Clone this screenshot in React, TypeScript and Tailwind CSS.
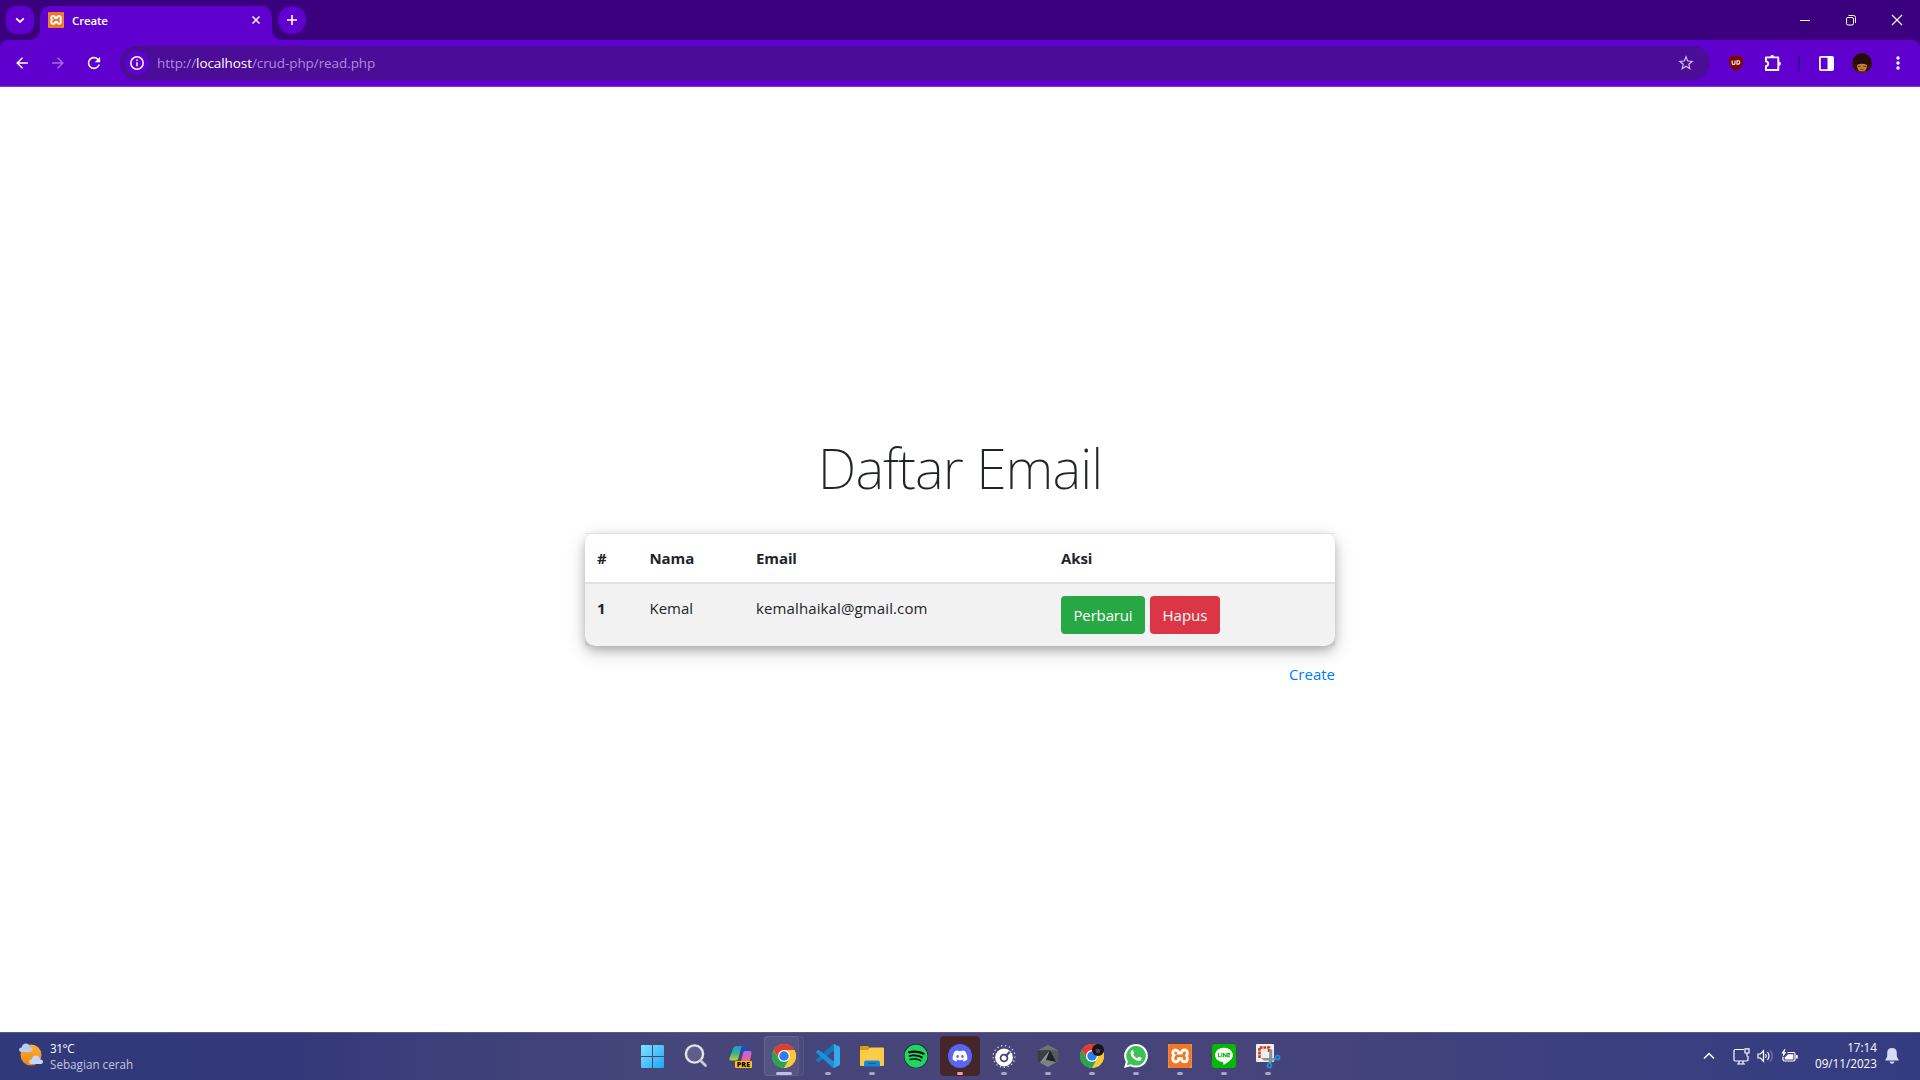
import React from "react";
import { MdArrowBack, MdArrowForward, MdRefresh, MdStarOutline } from "react-icons/md";
import { FaSpotify, FaDiscord, FaLine } from "react-icons/fa";
import { SiXampp } from "react-icons/si";

function XamppLogo({ className }: { className: string }) {
  return (
    <span className={`flex overflow-hidden rounded-[2px] bg-white ${className}`}>
      <SiXampp className="h-full w-full text-[#f37623]" />
    </span>
  );
}

function Chrome() {
  return (
    <svg viewBox="0 0 48 48" className="size-6">
      <circle cx="24" cy="24" r="23.500" fill="#fff" />
      <path d="M24 12h20.8A24 24 0 0 0 3.2 12l10.4 18z" fill="#e33b2e" />
      <path d="M34.4 30 24 48A24 24 0 0 0 44.8 12H24z" fill="#fcc934" />
      <path d="M13.6 30 3.2 12A24 24 0 0 0 24 48l10.4-18z" fill="#2ba24c" />
      <circle cx="24" cy="24" r="12" fill="#fff" />
      <circle cx="24" cy="24" r="9.5" fill="#2f7de9" />
    </svg>
  );
}

function WindowsLogo() {
  return (
    <svg viewBox="0 0 23 23" className="size-[23px]">
      <defs>
        <linearGradient id="win" x1="0" y1="0" x2="1" y2="1">
          <stop offset="0" stopColor="#82e0fb" />
          <stop offset="1" stopColor="#1fa6f8" />
        </linearGradient>
      </defs>
      <path d="M1 0h10v11H0V1q0-1 1-1M12 0h10q1 0 1 1v10H12zM0 12h11v11H1q-1 0-1-1zM12 12h11v10q0 1-1 1H12z" fill="url(#win)" />
    </svg>
  );
}

function Search() {
  return (
    <svg viewBox="0 0 24 24" className="size-6" fill="none">
      <circle cx="10.500" cy="10" r="8.600" fill="#ffffff22" stroke="#e3e3e6" strokeWidth="2.400" />
      <path d="m16.500 16.500 5 5" stroke="#c9c9d2" strokeWidth="2.800" strokeLinecap="round" />
    </svg>
  );
}

function Copilot() {
  return (
    <svg viewBox="0 0 24 24" className="size-6 shrink-0">
      <defs>
        <linearGradient id="cpA" x1="0" y1="0" x2="0" y2="1">
          <stop offset="0" stopColor="#2596d8" />
          <stop offset=".5" stopColor="#33b58d" />
          <stop offset="1" stopColor="#c6cf31" />
        </linearGradient>
        <linearGradient id="cpB" x1="0" y1="0" x2="0" y2="1">
          <stop offset="0" stopColor="#b865e6" />
          <stop offset="1" stopColor="#f0648b" />
        </linearGradient>
      </defs>
      <path d="M11 2h6q1.500 0 2 1.500L20.200 7H12z" fill="#164fc0" />
      <path d="M17 7h5q2 0 1.500 2.200L22 17h-9l2.200-8q.5-2 1.800-2" fill="url(#cpB)" />
      <path d="M8 2h7q-1.500 0-2 2l-2.500 10Q10 16.500 8 16.500H3Q.8 16.500 1.500 14L5.300 4Q6 2 8 2" fill="url(#cpA)" />
    </svg>
  );
}

function VsCode() {
  return (
    <svg viewBox="0 0 24 24" className="size-6">
      <path d="M18 6.500 3 18 1.600 17.900.3 16.700q-.6-.7 0-1.400L16.500.5Q17.300-.2 18 .1z" fill="#1279be" />
      <path d="M18 17.500 3 6 1.600 6.100.3 7.300q-.6.7 0 1.400L16.500 23.500q.8.700 1.500.4z" fill="#1c8fd8" />
      <path d="M18 .1 23.150 2.590q.85.500.85 1.350v16.100q0 .9-.85 1.370L18 23.900q-.8.300-1.500-.4 1.500.7 1.500-1V1.500q0-1.700-1.500-1 .7-.7 1.500-.4" fill="#36a9ee" />
    </svg>
  );
}

function Explorer() {
  return (
    <svg viewBox="0 0 24 24" className="size-6">
      <path d="M0 3q0-1 1-1h7l2 2.500V9H0z" fill="#dd9a0c" />
      <path d="M0 6h8l2-2.500h13q1 0 1 1V21q0 1-1 1H1q-1 0-1-1z" fill="#fccc48" />
      <path d="M4 22.500v-4q0-2 2-2h12q2 0 2 2v4z" fill="#1588d9" />
      <path d="M8 19.500h8" stroke="#0b5ba6" strokeWidth="1.200" />
    </svg>
  );
}

function Dial() {
  return (
    <svg viewBox="0 0 24 24" className="size-6">
      <circle cx="12" cy="12.500" r="10.900" fill="none" stroke="#d9d9e6" strokeWidth="1.300" strokeDasharray="1.300 2.700" pathLength="68" />
      <circle cx="12" cy="13.500" r="8.900" fill="#fff" />
      <circle cx="12" cy="14" r="3.400" fill="none" stroke="#47447a" strokeWidth="1.800" />
      <path d="m13 13 4.800-5.200" stroke="#47447a" strokeWidth="2" />
      <circle cx="12" cy="14" r="2.300" fill="#fff" />
    </svg>
  );
}

function Polyhedron() {
  return (
    <svg viewBox="0 0 24 24" className="size-6">
      <path d="M12 1 22.500 6.500v11L12 23 1.500 17.500v-11z" fill="#555a5f" />
      <path d="M12 1 22.500 6.500 14 6 1.500 6.500z" fill="#6d7276" />
      <path d="M1.500 6.500 14 6 4 18.500l-2.500-1z" fill="#3a3e43" />
      <path d="m14 6-10 12.500 6-2.500z" fill="#8d9296" />
      <path d="m14 6-4 10 10 2z" fill="#1e2125" />
      <path d="m4 18.500 6-2.500 10 2-8 5z" fill="#7d8286" />
    </svg>
  );
}

function Snip() {
  return (
    <svg viewBox="0 0 24 24" className="size-6 overflow-visible">
      <rect width="18" height="18" rx="1" fill="#f0eeee" />
      <path d="M3.500 14V3.500H13V8" fill="none" stroke="#d23a12" strokeWidth="2.600" strokeDasharray="2.800 .8" />
      <path d="M13.500 5.500h2.800V18l-3.500 2v-2.500zM5 14h14v2.600h-11z" fill="#8a9099" />
      <circle cx="21.500" cy="13.500" r="2" fill="none" stroke="#1793e6" strokeWidth="1.700" />
      <circle cx="13.500" cy="21.500" r="2" fill="none" stroke="#1793e6" strokeWidth="1.700" />
    </svg>
  );
}

function TaskItem({ children, open, box }: { children: React.ReactNode; open?: boolean; box?: "discord" | "active" }) {
  return (
    <div className="relative flex h-10 w-11 items-center justify-center">
      {box === "discord" && <div className="absolute inset-x-0.5 inset-y-0 rounded-[4px] bg-[#45272b]" />}
      {box === "active" && (
        <>
          <div className="absolute inset-y-0 left-0.5 w-10 rounded-[4px] border border-white/5 bg-white/[0.03]" />
          <div className="absolute inset-y-0 left-0.5 w-[35px] rounded-[4px] border border-white/5 bg-white/5" />
        </>
      )}
      <div className="relative flex size-6 items-center justify-center">{children}</div>
      {open && (
        <div
          className={`absolute top-9 left-1/2 h-[3px] -translate-x-1/2 rounded-full ${
            box === "active" ? "w-4 bg-[#b9c0e6]" : box === "discord" ? "w-1.5 bg-[#ff9ba3]" : "w-1.5 bg-[#a5a6c4]"
          }`}
        />
      )}
    </div>
  );
}

function TabStrip() {
  return (
    <div className="flex h-10 items-start bg-[#3b007d] pl-1.5">
      <button className="mt-1.5 flex size-7 items-center justify-center rounded-[10px] bg-[#5f00cf]">
        <svg viewBox="0 0 10 10" className="size-2.5" fill="none" stroke="#fff" strokeWidth="1.800">
          <path d="m1.200 3.300 3.800 3.700 3.800-3.700" />
        </svg>
      </button>
      <div className="relative mt-1.5 ml-1.5 flex h-[34px] w-[232px] items-start rounded-t-[10px] bg-[#5f00cf] pt-1.5 pl-2">
        <svg viewBox="0 0 10 10" className="absolute bottom-0 -left-2.5 size-2.5 fill-[#5f00cf]">
          <path d="M10 0v10H0A10 10 0 0 0 10 0" />
        </svg>
        <svg viewBox="0 0 10 10" className="absolute -right-2.5 bottom-0 size-2.5 fill-[#5f00cf]">
          <path d="M0 0v10h10A10 10 0 0 1 0 0" />
        </svg>
        <XamppLogo className="size-4" />
        <span className="ml-2 text-[11.5px] leading-[17px] font-semibold tracking-[-0.15px] text-white">Create</span>
        <svg viewBox="0 0 8 8" className="mt-1 mr-3 ml-auto size-2" fill="none" stroke="#fff" strokeWidth="1.500">
          <path d="m.5.5 7 7m0-7-7 7" />
        </svg>
      </div>
      <button className="mt-1.5 ml-1.5 flex size-7 items-center justify-center rounded-full bg-[#5f00cf]">
        <svg viewBox="0 0 10 10" className="size-2.5" stroke="#fff" strokeWidth="1.600">
          <path d="M5 0v10M0 5h10" />
        </svg>
      </button>
      <div className="mt-[15px] mr-[18px] ml-auto flex items-center gap-9">
        <svg viewBox="0 0 10 10" className="size-2.5" stroke="#fff"><path d="M0 5.500h10" /></svg>
        <svg viewBox="0 0 10 10" className="size-2.5 overflow-visible" fill="none" stroke="#fff">
          <rect x=".5" y="2.500" width="7" height="7.500" rx="1.500" />
          <path d="M2.500.5H7.500q2 0 2 2V8" />
        </svg>
        <svg viewBox="0 0 10 10" className="size-2.5 overflow-visible" stroke="#fff" strokeWidth="1.100"><path d="m0 0 10 10M10 0 0 10" /></svg>
      </div>
    </div>
  );
}

function Toolbar() {
  return (
    <div className="bg-[#3b007d]">
      <div className="flex h-[47px] items-center rounded-t-[8px] border-b border-[#7f33d9] bg-[#5f00cf] pl-3.5 text-white">
        <MdArrowBack className="size-4 scale-110" />
        <MdArrowForward className="ml-5 size-4 scale-110 text-[#a56be4]" />
        <MdRefresh className="ml-5 size-4 scale-[1.15]" />
        <div className="ml-[18px] flex h-[34px] w-[1590px] items-center rounded-full bg-[#4b0c98] pr-4 pl-[5px]">
          <span className="flex size-6 items-center justify-center rounded-full bg-[#5f00cf]">
            <svg viewBox="0 0 14 14" className="size-3.5" fill="none" stroke="#fff" strokeWidth="1.500">
              <circle cx="7" cy="7" r="6.200" />
              <path d="M7 6.200v4M7 3.600v1.500" />
            </svg>
          </span>
          <span className="ml-2 text-[13.5px] leading-5 tracking-[-0.08px] whitespace-nowrap text-[#b08ad9]">
            http://<span className="text-white">localhost</span>/crud-php/read.php
          </span>
          <MdStarOutline className="ml-auto size-4 scale-[1.15] text-[#cdbce0]" />
        </div>
        <svg viewBox="0 0 14 16" className="ml-[19px] h-4 w-3.5">
          <path d="M7 0q3 2 7 2v5q0 6-7 9-7-3-7-9V2q4 0 7-2" fill="#7f0505" />
          <path d="M3.200 5.500v2.700q0 1.300 1.400 1.300T6 8.200V5.500M8 5.800h1q1.800 0 1.800 1.700T9 9.200H8z" fill="none" stroke="#fff" strokeWidth="1.100" />
        </svg>
        <svg viewBox="0 0 18 18" className="ml-[21px] size-[18px]">
          <path d="M1.900 3.400H14.300V16H1.900V12.200q2.300-.4 2.300-2.500T1.900 7.200z" fill="none" stroke="#fff" strokeWidth="1.900" strokeLinejoin="round" />
          <path d="M6.200 3a2 2 0 0 1 4 0zM15 7.700a2 2 0 0 1 0 4z" fill="#fff" />
        </svg>
        <span className="ml-4 h-4 w-0.5 shrink-0 bg-[#42058f]" />
        <svg viewBox="0 0 15 15" className="ml-[19px] size-[15px]">
          <rect x=".9" y=".9" width="13.200" height="13.200" rx="1" fill="none" stroke="#fff" strokeWidth="1.800" />
          <path d="M8.500 1H14v13H8.500z" fill="#fff" />
        </svg>
        <svg viewBox="0 0 20 20" className="ml-[18px] size-5">
          <defs><clipPath id="av"><circle cx="10" cy="10" r="10" /></clipPath></defs>
          <g clipPath="url(#av)">
            <path d="M0 0h20v20H0z" fill="#35120c" />
            <path d="M2 4q8-6 16 0v7H2z" fill="#260c09" />
            <path d="M5 12q5-2.500 10 0l-.5 3q-1 3.500-4.500 3.500T5.500 15z" fill="#c98232" />
            <path d="M6 13.300h3M11 13.300h3M8.500 16.300h3" stroke="#5e2f12" />
            <path d="M2 20q2-2.500 5-2l3 1 3-1q3-.5 5 2z" fill="#3d3a1c" />
          </g>
        </svg>
        <svg viewBox="0 0 4 14" className="ml-6 h-3.5 w-1" fill="#fff">
          <circle cx="2" cy="2" r="1.700" /><circle cx="2" cy="7" r="1.700" /><circle cx="2" cy="12" r="1.700" />
        </svg>
      </div>
    </div>
  );
}

function Content() {
  return (
    <main className="flex h-[945px] flex-col items-center bg-white pt-[347px] text-[15px] leading-6 text-[#212529]">
      <h1 className="mb-8 h-[67px] font-['Noto_Sans',sans-serif] text-[55px] leading-[67px] font-extralight tracking-[-0.95px] whitespace-nowrap">Daftar Email</h1>
      <div className="w-[750px] rounded-[10px] shadow-[0_4px_8px_0_rgba(0,0,0,0.2),0_6px_20px_0_rgba(0,0,0,0.19)]">
        <div className="grid h-[51px] grid-cols-[53px_106px_305px_286px] border-t border-b-2 border-[#dee2e6] pt-3 font-bold tracking-[-0.1px]">
          <span className="pl-3">#</span>
          <span className="pl-[11.5px]">Nama</span>
          <span className="pl-3">Email</span>
          <span className="pl-3">Aksi</span>
        </div>
        <div className="grid h-[62px] grid-cols-[53px_106px_305px_286px] bg-black/5 pt-3">
          <span className="pl-3 font-bold">1</span>
          <span className="pl-[11.5px]">Kemal</span>
          <span className="pl-3 tracking-[0.12px]">kemalhaikal@gmail.com</span>
          <div className="flex gap-[5px] pl-3 text-white">
            <button className="h-[38px] w-[84px] rounded-[4px] bg-[#28a745] tracking-[-0.15px]">Perbarui</button>
            <button className="h-[38px] w-[70px] rounded-[4px] bg-[#dc3545]">Hapus</button>
          </div>
        </div>
      </div>
      <div className="mt-4 flex w-[750px] justify-end text-[#007bff]">Create</div>
    </main>
  );
}

function Taskbar() {
  return (
    <footer className="grid h-12 grid-cols-[1fr_auto_1fr] items-start border-t border-[#5a5c85] bg-[linear-gradient(90deg,#30397a_0%,#33387b_15%,#3e4179_25%,#454679_35%,#484479_55%,#45437b_68%,#3a4080_84%,#343b80_100%)] pt-[3px] text-[11.7px] text-white">
      <div className="flex pt-[7px] pl-[19px]">
        <svg viewBox="0 0 24 24" className="size-6">
          <defs><linearGradient id="sun" x1="0" y1="0" x2="0" y2="1"><stop offset="0" stopColor="#fbb03a" /><stop offset="1" stopColor="#ef850f" /></linearGradient></defs>
          <circle cx="12" cy="12" r="10.500" fill="url(#sun)" />
          <path d="M2.500 9Q0 9 0 6.800T2.600 4.600Q3.500.5 7 .5T10.500 4q3 .3 3 2.600T11 9z" fill="#b9cdf3" />
          <path d="M12.500 21q-2.500 0-2.500-2.200t2.800-2.200q.7-4 4.200-4t4 4q3-.2 3 2.200T21.500 21z" fill="#c6d7f8" />
        </svg>
        <div className="ml-[7px] flex flex-col leading-4">
          <span className="-mt-[3px] tracking-[-0.4px]">31°C</span>
          <span className="text-[#c3c5df]">Sebagian cerah</span>
        </div>
      </div>
      <div className="flex">
        <TaskItem><WindowsLogo /></TaskItem>
        <TaskItem><Search /></TaskItem>
        <TaskItem>
          <Copilot />
          <span className="absolute top-[17px] left-[7px] flex h-[7px] w-[17px] items-center justify-center rounded-[1px] bg-[#fdc30a] text-[7px] leading-none font-extrabold tracking-[0.2px] text-black">PRE</span>
        </TaskItem>
        <TaskItem open box="active"><Chrome /></TaskItem>
        <TaskItem open><VsCode /></TaskItem>
        <TaskItem open><Explorer /></TaskItem>
        <TaskItem>
          <span className="flex rounded-full bg-black"><FaSpotify className="size-6 text-[#1ed760]" /></span>
        </TaskItem>
        <TaskItem open box="discord">
          <span className="flex size-6 items-center justify-center rounded-full bg-[#5865f2]"><FaDiscord className="size-4 text-white" /></span>
        </TaskItem>
        <TaskItem open><Dial /></TaskItem>
        <TaskItem open><Polyhedron /></TaskItem>
        <TaskItem open>
          <Chrome />
          <svg viewBox="0 0 12 12" className="absolute top-0 right-0 size-3">
            <circle cx="6" cy="6" r="6" fill="#17131a" />
            <path d="M3.500 5.500q2.500-1.500 5 0l-.5 3q-2 2-4 0z" fill="#4b4346" />
          </svg>
        </TaskItem>
        <TaskItem open>
          <svg viewBox="0 0 24 24" className="size-6">
            <path d="M12.200 0A11.800 11.800 0 1 1 6.500 22.200L0 24l1.800-6.300A11.800 11.800 0 0 1 12.200 0" fill="#fff" />
            <path d="M12.200 2A9.800 9.800 0 1 1 7 20.200l-4.200 1.100L4 17.300A9.800 9.800 0 0 1 12.200 2" fill="#3cc254" />
            <path d="M8 6.300q.8-.4 1.200.2l1 2.200q.2.500-.3 1l-.7.9q1.300 2.500 3.900 3.600l1.100-1.300q.3-.4.800-.2l2.300 1.100q.5.300.3.900-.6 2.200-3 2.300-2.500 0-5.400-2.700-2.700-2.700-2.700-5.200 0-1.800 1.500-2.800" fill="#fff" />
          </svg>
        </TaskItem>
        <TaskItem open><XamppLogo className="size-6" /></TaskItem>
        <TaskItem open>
          <span className="flex size-6 items-center justify-center overflow-hidden rounded-[3px] bg-[#00b900]">
            <span className="flex size-[22px] items-center justify-center bg-white"><FaLine className="size-7 shrink-0 text-[#00b900]" /></span>
          </span>
        </TaskItem>
        <TaskItem open><Snip /></TaskItem>
      </div>
      <div className="flex h-10 items-center justify-end pr-[21px]">
        <svg viewBox="0 0 12 8" className="h-2 w-3" fill="none" stroke="#fff" strokeWidth="1.500"><path d="m1 6.500 5-5 5 5" /></svg>
        <svg viewBox="0 0 17 17" className="ml-[18px] size-[17px]" fill="none" stroke="#fff" strokeWidth="1.200">
          <path d="M11 1.500H2.200Q1 1.500 1 2.700v9.100q0 1.200 1.200 1.200h11.600q1.200 0 1.200-1.200V8M6 13v2.500M10 13v2.500M4 16h8" />
          <path d="M12 .8h4V5h-4zM14 5v3.500" />
        </svg>
        <svg viewBox="0 0 17 14" className="ml-[7px] h-3.5 w-[17px]" fill="none" stroke="#fff" strokeWidth="1.200">
          <path d="M1 5h2.500l3-3.200v10.400L3.500 9H1z" />
          <path d="M8.500 5q1.500 2 0 4M10.500 3q3 4 0 8" />
          <path d="M13 1.200q4.500 5.800 0 11.600" stroke="#7076a5" />
        </svg>
        <svg viewBox="0 0 17 14" className="ml-[7px] h-3.5 w-[17px]">
          <path d="M6.500 3.500h6q1.500 0 1.500 1.500v5.500q0 1.500-1.500 1.500H3.500Q2 12 2 10.500V8" fill="none" stroke="#fff" strokeWidth="1.200" />
          <path d="M7 5.200h5.400v5.200H3.700V8.500zM15 6h1.700v3.500H15zM3.500 0 .3 4.600h2L1.500 8 5.500 3.200H3.300L4.500 0z" fill="#fff" />
        </svg>
        <div className="mb-0.5 ml-4 flex w-[63px] flex-col text-right leading-4 whitespace-nowrap">
          <span>17:14</span>
          <span>09/11/2023</span>
        </div>
        <svg viewBox="0 0 14 16" className="ml-2 h-4 w-3.5" fill="#d5dcf5">
          <path d="M7 0q4.800 0 4.800 5v3.500l1.800 3.200v.8H.4v-.8l1.800-3.200V5Q2.200 0 7 0M4.500 13.500h5Q9 15.700 7 15.700t-2.500-2.200" />
        </svg>
      </div>
    </footer>
  );
}

export default function App() {
  return (
    <div className="h-[1080px] w-[1920px] overflow-hidden font-['Open_Sans','Noto_Sans',sans-serif]">
      <TabStrip />
      <Toolbar />
      <Content />
      <Taskbar />
    </div>
  );
}
